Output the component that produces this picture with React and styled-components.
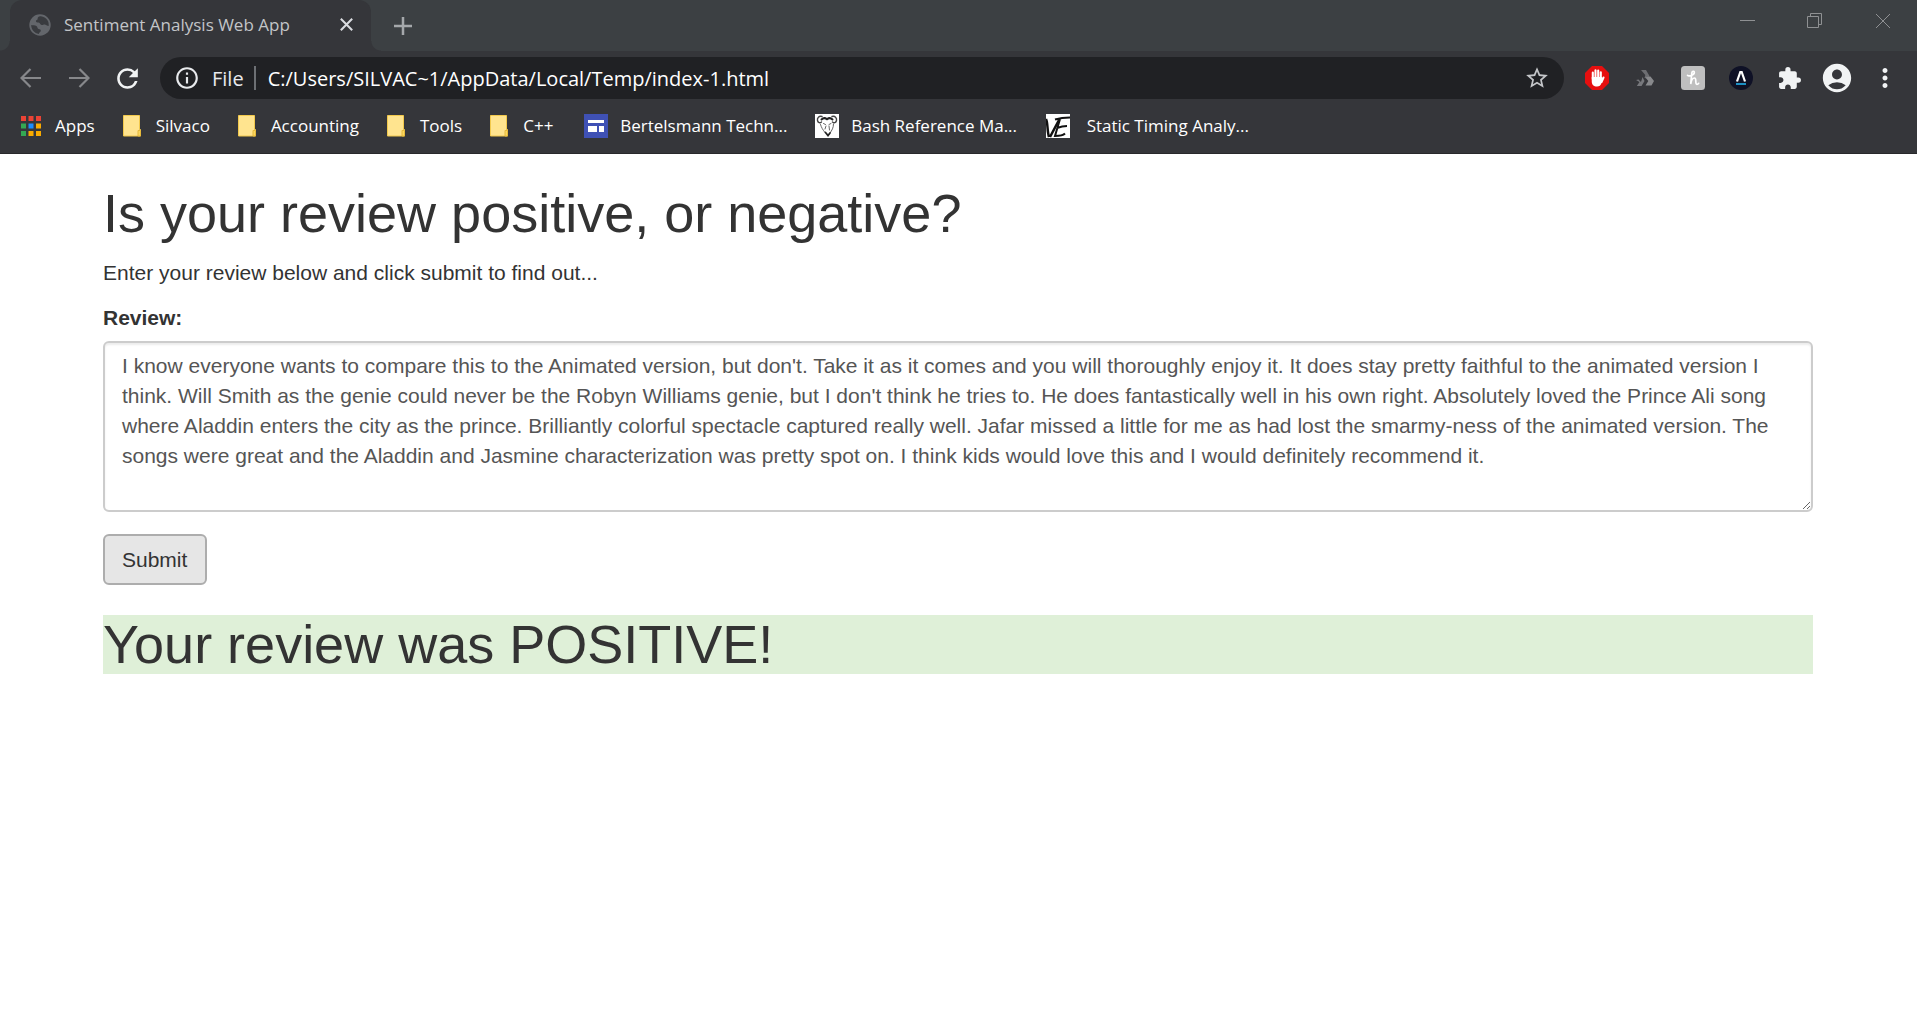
import React, { useState } from "react";
import styled, { createGlobalStyle } from "styled-components";
import {
  MdAccountCircle,
  MdExtension,
  MdInfoOutline,
  MdMoreVert,
  MdRefresh,
  MdStarBorder,
} from "react-icons/md";

const uiFont = `"Segoe UI", "Open Sans", "Noto Sans", sans-serif`;
const pageFont = `"Helvetica Neue", Arial, "Liberation Sans", sans-serif`;

const GlobalStyle = createGlobalStyle`
  *, *::before, *::after { box-sizing: border-box; }
  body { margin: 0; background: #fff; }
`;

/* ---------- browser chrome ---------- */

const Chrome = styled.header`
  font-family: ${uiFont};
  background: #35363a;
  border-bottom: 1px solid #28292b;
`;

const TabStrip = styled.div`
  display: flex;
  align-items: stretch;
  height: 51px;
  background: #3c4043;
`;

const Flare = styled.span`
  flex: none;
  width: 10px;
  background: radial-gradient(
    circle at ${(p) => (p.$side === "left" ? "0 0" : "100% 0")},
    transparent 9px,
    #35363a 10px
  ) 0 100% / 10px 10px no-repeat;
`;

const Tab = styled.div`
  display: flex;
  align-items: center;
  width: 361px;
  padding: 0 12px 2px 19px;
  background: #35363a;
  border-radius: 12px 12px 0 0;
  color: #c3c5c8;
  font-size: 17px;
`;

const TabTitle = styled.span`
  flex: 1;
  margin-left: 13px;
  white-space: nowrap;
`;

const PlainButton = styled.button`
  display: flex;
  align-items: center;
  justify-content: center;
  padding: 0;
  border: 0;
  background: none;
  color: ${(p) => p.$color || "#f1f3f4"};
`;

const TabClose = styled(PlainButton)`
  width: 26px;
  height: 26px;
`;

const NewTab = styled(PlainButton)`
  width: 44px;
`;

const WindowControls = styled.div`
  display: flex;
  align-items: flex-start;
  margin-left: auto;
`;

const WindowButton = styled(PlainButton)`
  width: 68px;
  height: 42px;
`;

const Toolbar = styled.div`
  display: flex;
  align-items: center;
  gap: 9px;
  height: 54px;
  padding: 0 8px 0 7px;
`;

const ButtonGroup = styled.div`
  display: flex;
`;

const ToolButton = styled(PlainButton)`
  width: 48px;
  height: 42px;
`;

const Omnibox = styled.div`
  display: flex;
  flex: 1;
  align-items: center;
  height: 42px;
  padding: 0 14px;
  border-radius: 21px;
  background: #202124;
  color: #e8eaed;
  font-size: 20px;
`;

const SchemeLabel = styled.label`
  padding: 0 10px 0 12px;
  color: #e8eaed;
`;

const Divider = styled.span`
  width: 2px;
  height: 24px;
  background: #6d7074;
`;

const Address = styled.input`
  flex: 1;
  min-width: 0;
  margin-left: 12px;
  padding: 0;
  border: 0;
  outline: 0;
  background: none;
  color: #fff;
  font: inherit;
`;

const BookmarkBar = styled.nav`
  display: flex;
  align-items: center;
  gap: 25px;
  height: 48px;
  padding: 0 19px 6px;
`;

const Bookmark = styled.a`
  display: flex;
  align-items: center;
  gap: 12px;
  color: #fff;
  font-size: 17px;
  line-height: 24px;
  text-decoration: none;
  white-space: nowrap;
`;

const BookmarkTitle = styled.span`
  min-width: ${(p) => (p.$elided ? "170px" : "36px")};
`;

/* ---------- page ---------- */

const Page = styled.main`
  max-width: 1755px;
  margin: 0 auto;
  padding: 30px 23px 30px 22px;
  color: #333;
  font-family: ${pageFont};
  font-size: 21px;
  line-height: 30px;
`;

const Heading = styled.h1`
  margin: 0 0 15px;
  font-size: 54px;
  font-weight: 400;
  line-height: 59px;
`;

const Intro = styled.p`
  margin: 0 0 15px;
`;

const Label = styled.label`
  display: block;
  margin-bottom: 8px;
  font-weight: 700;
`;

const ReviewBox = styled.textarea`
  display: block;
  width: 100%;
  margin-bottom: 22px;
  padding: 8px 17px 9px;
  border: 2px solid #ccc;
  border-radius: 6px;
  box-shadow: inset 0 2px 2px rgba(0, 0, 0, 0.075);
  color: #555;
  font: inherit;
  outline: 0;
`;

const Submit = styled.button`
  padding: 9px 18px 8px 17px;
  border: 2px solid #adadad;
  border-radius: 6px;
  background: #e6e6e6;
  color: #333;
  font: inherit;
`;

const Result = styled(Heading)`
  margin-top: 30px;
  background: #dff0d8;
`;

/* ---------- icons ---------- */

const Globe = () => (
  <svg width="22" height="22" viewBox="0 0 22 22">
    <circle cx="11" cy="11" r="10.7" fill="#63666b" />
    <path
      fill="#393b3f"
      d="M12 2.2c-3 .2-3.400 1.400-3.300 2.600.1 1.300-1.700 1-1.800 2.200-.1 1.300 1.200 1.600 2.700 1.600 1.700.1 1.400 2.400 3 2.500 1.600.1 2.200-.8 3.700-.4 1.300.4 1.800 1.200 3.400 1.300.6-4.800-2.200-8.900-7.700-9.800zM2.200 11c0 4.600 3.300 8.400 7.600 8.900.2-1.500 1.800-1.700 2-3.200.1-1.300-.9-1.700-2.200-1.800-1.300-.2-.9-2.200-2.200-2.900C6 11.300 4 11.200 2.200 11z"
    />
  </svg>
);

const Cross = ({ size, weight }) => (
  <svg width={size} height={size} viewBox="0 0 16 16" stroke="currentColor" strokeWidth={weight} fill="none">
    <path d="M1 1l14 14M15 1L1 15" />
  </svg>
);

const Plus = () => (
  <svg width="18" height="18" viewBox="0 0 18 18" stroke="currentColor" strokeWidth="2.500">
    <path d="M9 0v18M0 9h18" />
  </svg>
);

const Minimize = () => (
  <svg width="15" height="15" viewBox="0 0 15 15" stroke="currentColor">
    <path d="M0 6.500h15" />
  </svg>
);

const Restore = () => (
  <svg width="16" height="16" viewBox="0 0 16 16" stroke="currentColor" fill="none">
    <path d="M.5 3.500h11v11H.5zM3.500 3.500v-3h11v11h-3" />
  </svg>
);

const Arrow = ({ forward }) => (
  <svg width="22" height="22" viewBox="0 0 22 22" stroke="currentColor" strokeWidth="2.200" fill="none">
    <path d={forward ? "M1 11h19M11.500 2l9 9-9 9" : "M21 11H2M10.500 2l-9 9 9 9"} />
  </svg>
);

const StopHand = () => (
  <svg width="24" height="24" viewBox="0 0 24 24">
    <path fill="#e60f0f" d="M7 0h10l7 7v10l-7 7H7l-7-7V7z" />
    <g stroke="#fff" strokeWidth="2.100" strokeLinecap="round" fill="none">
      <path d="M7.800 13V6.500M10.500 12V4.300M13.200 12V4.500M15.800 13V6.300M16.500 16l2-4.500" />
    </g>
    <path fill="#fff" d="M6.750 11h10.100l.7 2-1 4c-.8 2.500-2.200 3.500-4.500 3.500-3.400 0-5.300-2-5.300-5z" />
  </svg>
);

const Chevrons = () => (
  <svg width="18" height="18" viewBox="0 0 18 18">
    <path fill="#6c6d71" d="M5 1h5l3.500 6-2 2.500L8.500 9 9.300 6z" />
    <path fill="#88898c" d="M13 7.500l1.500 0L18 12l-2.500 4.500H9.500l2.800-4.500L9.500 8.500z" />
    <path fill="#77787c" d="M0 11l2.500-.5L5 13 6.500 8 8.500 12 5.500 17H.8l2.700-4z" />
  </svg>
);

const Honey = () => (
  <svg width="24" height="24" viewBox="0 0 24 24">
    <rect width="24" height="24" rx="3.500" fill="#bfbfbf" />
    <path
      d="M6.500 9.300c1.200 1.500 6.800-.2 6.800-2.800 0-2-2.300-1.500-2.500.6L9.700 18c.6-3.500 2.100-6 3.800-6 2.500 0 .2 6.300 2.400 6.300.8 0 1.300-.3 1.700-1"
      stroke="#fff"
      strokeWidth="1.700"
      strokeLinecap="round"
      fill="none"
    />
  </svg>
);

const Lambda = () => (
  <svg width="24" height="24" viewBox="0 0 24 24">
    <circle cx="12" cy="12" r="12" fill="#0f1126" />
    <path d="M8 15.500l3.300-9.500h1.400L16 15.500" stroke="#fff" strokeWidth="2.200" fill="none" />
    <path fill="#1c8fc4" d="M7 17h10v2H7z" />
  </svg>
);

const appColors = ["#ea4335", "#ea4335", "#ea4335", "#34a853", "#1a8cff", "#f9ab00", "#34a853", "#f9ab00", "#f9ab00"];

const AppsGrid = () => (
  <svg width="24" height="24" viewBox="0 0 24 24">
    {appColors.map((color, i) => (
      <rect key={i} x={2 + (i % 3) * 7.500} y={2 + Math.floor(i / 3) * 7.500} width="5" height="5" fill={color} />
    ))}
  </svg>
);

const Folder = () => (
  <svg width="24" height="24" viewBox="0 0 24 24">
    <path fill="#ffe48f" stroke="#f2c94c" d="M3.500 1.500h16v14h1v6.500h-17z" />
    <path fill="#fbd75f" stroke="#e6b93a" d="M18 22v-5.500h2.500v5.500z" />
  </svg>
);

const SitesIcon = () => (
  <svg width="24" height="24" viewBox="0 0 24 24">
    <rect width="24" height="24" fill="#3f51b5" />
    <path fill="#fff" d="M4 6h16v3H4zM4 12h9v6H4zM15 12h5v6h-5z" />
  </svg>
);

const GnuIcon = () => (
  <svg width="24" height="24" viewBox="0 0 24 24">
    <rect width="24" height="24" fill="#fff" />
    <g fill="none" stroke="#555" strokeLinecap="round">
      <path stroke="#444" strokeWidth="1.400" d="M7 2.500C4 1.500 2 4 2.500 6.500 3 8.800 5 9.300 6.500 8M17 2.500c3-1 5 1.500 4.500 4-.5 2.300-2.500 2.800-4 1.500" />
      <path stroke="#222" strokeWidth="2" d="M6.500 5.500c2-2 4-1.500 5.500-.2 1.500-1.300 3.500-1.800 5.500.2" />
      <path strokeWidth=".9" d="M5.500 10.500c1 3 2 5 4.500 8M18.500 10c0 4-1.500 6-3.500 9M8.500 9.500l2 1M14 10.500l2-1M11 12l-1 3M14 12l.5 4" />
      <path stroke="#222" strokeWidth="1.800" d="M10.500 18.500l2.500 3 2-2.500" />
    </g>
  </svg>
);

const SignatureIcon = () => (
  <svg width="24" height="24" viewBox="0 0 24 24">
    <rect width="24" height="24" fill="#fff" />
    <g fill="none" stroke="#111">
      <path strokeWidth="2.500" d="M0 5c2 4 1 12 3 18M4 23l9-17" />
      <path strokeWidth="2" d="M9 5.500c5-1.500 10-2 15-2M14 5L9 22c5 0 8-.5 10-2.500M11 14c4-1.500 7-2 10-2" />
    </g>
  </svg>
);

/* ---------- content ---------- */

const bookmarks = [
  { title: "Apps", Icon: AppsGrid },
  { title: "Silvaco", Icon: Folder },
  { title: "Accounting", Icon: Folder },
  { title: "Tools", Icon: Folder },
  { title: "C++", Icon: Folder },
  { title: "Bertelsmann Techn...", Icon: SitesIcon, elided: true },
  { title: "Bash Reference Ma...", Icon: GnuIcon, elided: true },
  { title: "\u00a0Static Timing Analy...", Icon: SignatureIcon, elided: true },
];

const extensions = [
  { name: "Ad blocker", icon: <StopHand /> },
  { name: "Chevrons", icon: <Chevrons /> },
  { name: "Honey", icon: <Honey /> },
  { name: "Lambda", icon: <Lambda /> },
  { name: "Extensions", icon: <MdExtension size={25} /> },
  { name: "Profile", icon: <MdAccountCircle size={34} /> },
  { name: "Menu", icon: <MdMoreVert size={30} /> },
];

const sampleReview =
  "I know everyone wants to compare this to the Animated version, but don't. Take it as it comes and you will thoroughly enjoy it. It does stay pretty faithful to the animated version I think. Will Smith as the genie could never be the Robyn Williams genie, but I don't think he tries to. He does fantastically well in his own right. Absolutely loved the Prince Ali song where Aladdin enters the city as the prince. Brilliantly colorful spectacle captured really well. Jafar missed a little for me as had lost the smarmy-ness of the animated version. The songs were great and the Aladdin and Jasmine characterization was pretty spot on. I think kids would love this and I would definitely recommend it.";

function BrowserChrome() {
  const [url, setUrl] = useState("C:/Users/SILVAC~1/AppData/Local/Temp/index-1.html");
  return (
    <Chrome>
      <TabStrip>
        <Flare $side="left" />
        <Tab>
          <Globe />
          <TabTitle>Sentiment Analysis Web App</TabTitle>
          <TabClose aria-label="Close tab" $color="#dadce0">
            <Cross size={13} weight={2.5} />
          </TabClose>
        </Tab>
        <Flare $side="right" />
        <NewTab aria-label="New tab" $color="#a5a8ab">
          <Plus />
        </NewTab>
        <WindowControls>
          <WindowButton aria-label="Minimize" $color="#8f9193"><Minimize /></WindowButton>
          <WindowButton aria-label="Restore" $color="#8f9193"><Restore /></WindowButton>
          <WindowButton aria-label="Close" $color="#8f9193"><Cross size={16} weight={1} /></WindowButton>
        </WindowControls>
      </TabStrip>
      <Toolbar>
        <ButtonGroup>
          <ToolButton aria-label="Back" $color="#87888b"><Arrow /></ToolButton>
          <ToolButton aria-label="Forward" $color="#87888b"><Arrow forward /></ToolButton>
          <ToolButton aria-label="Reload"><MdRefresh size={31} /></ToolButton>
        </ButtonGroup>
        <Omnibox>
          <MdInfoOutline size={26} />
          <SchemeLabel htmlFor="address">File</SchemeLabel>
          <Divider />
          <Address id="address" value={url} onChange={(e) => setUrl(e.target.value)} spellCheck={false} />
          <PlainButton aria-label="Bookmark this page" $color="#c4c6c9"><MdStarBorder size={26} /></PlainButton>
        </Omnibox>
        <ButtonGroup>
          {extensions.map(({ name, icon }) => (
            <ToolButton key={name} aria-label={name}>{icon}</ToolButton>
          ))}
        </ButtonGroup>
      </Toolbar>
      <BookmarkBar>
        {bookmarks.map(({ title, Icon, elided }) => (
          <Bookmark key={title} href="#">
            <Icon />
            <BookmarkTitle $elided={elided}>{title}</BookmarkTitle>
          </Bookmark>
        ))}
      </BookmarkBar>
    </Chrome>
  );
}

export default function App() {
  const [review, setReview] = useState(sampleReview);
  return (
    <>
      <GlobalStyle />
      <BrowserChrome />
      <Page>
        <Heading>Is your review positive, or negative?</Heading>
        <Intro>Enter your review below and click submit to find out...</Intro>
        <form onSubmit={(e) => e.preventDefault()}>
          <Label htmlFor="review">Review:</Label>
          <ReviewBox
            id="review"
            rows={5}
            value={review}
            onChange={(e) => setReview(e.target.value)}
            spellCheck={false}
          />
          <Submit type="submit">Submit</Submit>
        </form>
        <Result>Your review was POSITIVE!</Result>
      </Page>
    </>
  );
}
